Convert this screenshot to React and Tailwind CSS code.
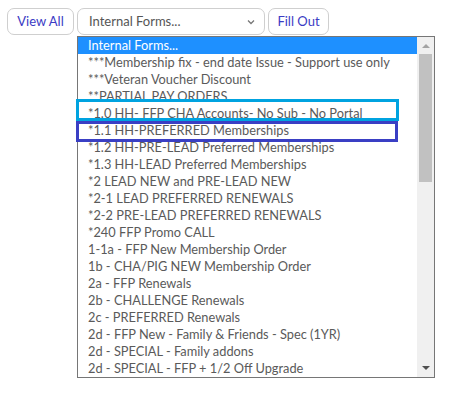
import React from "react";

const options = [
  "Internal Forms...",
  "***Membership fix - end date Issue - Support use only",
  "***Veteran Voucher Discount",
  "**PARTIAL PAY ORDERS",
  "*1.0 HH- FFP CHA Accounts- No Sub - No Portal",
  "*1.1 HH-PREFERRED Memberships",
  "*1.2 HH-PRE-LEAD Preferred Memberships",
  "*1.3 HH-LEAD Preferred Memberships",
  "*2 LEAD NEW and PRE-LEAD NEW",
  "*2-1 LEAD PREFERRED RENEWALS",
  "*2-2 PRE-LEAD PREFERRED RENEWALS",
  "*240 FFP Promo CALL",
  "1-1a - FFP New Membership Order",
  "1b - CHA/PIG NEW Membership Order",
  "2a - FFP Renewals",
  "2b - CHALLENGE Renewals",
  "2c - PREFERRED Renewals",
  "2d - FFP New - Family & Friends - Spec (1YR)",
  "2d - SPECIAL - Family addons",
  "2d - SPECIAL - FFP + 1/2 Off Upgrade",
];

const App = () => {
  return (
    <div className="w-[470px] h-[404px] bg-white relative font-['Lato',sans-serif] text-[12.8px]">
      <div className="flex gap-[3px] pt-[8px] pl-[7px]">
        <button className="w-[67px] h-[27px] border border-[#cfcfcf] rounded-[7px] text-[#3b3bc4] bg-white text-[13px]">
          View All
        </button>
        <div className="relative w-[188px] h-[27px] border border-[#cfcfcf] rounded-[7px] bg-white flex items-center pl-[11px] text-[#555] text-[13px]">
          <span>Internal Forms...</span>
          <svg className="absolute right-[9px] top-[10px]" width="8" height="6" viewBox="0 0 8 6">
            <path d="M1 1.5 L4 4.5 L7 1.5" fill="none" stroke="#777" strokeWidth="1.3" />
          </svg>
        </div>
        <button className="w-[61px] h-[27px] border border-[#cfcfcf] rounded-[7px] text-[#3b3bc4] bg-white text-[13px]">
          Fill Out
        </button>
      </div>

      <div className="absolute left-[77px] top-[36px] w-[358px] h-[342px] border border-[#767676] bg-white flex">
        <div className="flex-1 overflow-hidden">
          {options.map((o, i) => (
            <div
              key={i}
              className={
                i === 0
                  ? "h-[17px] leading-[17px] pl-[10px] whitespace-nowrap bg-[#1e90ff] text-white"
                  : "h-[17px] leading-[17px] pl-[10px] whitespace-nowrap text-[#5a5a5a]"
              }
            >
              {o}
            </div>
          ))}
        </div>
        <div className="w-[17px] bg-[#f0f0f0] flex flex-col items-center">
          <div className="h-[17px] flex items-center justify-center">
            <svg width="8" height="5" viewBox="0 0 8 5">
              <path d="M0 5 L4 1 L8 5 Z" fill="#a3a3a3" />
            </svg>
          </div>
          <div className="w-[13px] h-[128px] bg-[#c1c1c1]" />
          <div className="flex-1" />
          <div className="h-[17px] flex items-center justify-center">
            <svg width="8" height="5" viewBox="0 0 8 5">
              <path d="M0 0 L4 4 L8 0 Z" fill="#505050" />
            </svg>
          </div>
        </div>
      </div>

      <div className="absolute left-[76px] top-[99px] w-[323px] h-[22px] border-[3px] border-[#00a3e0]" />
      <div className="absolute left-[76px] top-[121px] w-[322px] h-[21px] border-[3px] border-[#3a3fc4]" />
    </div>
  );
};

export default App;
